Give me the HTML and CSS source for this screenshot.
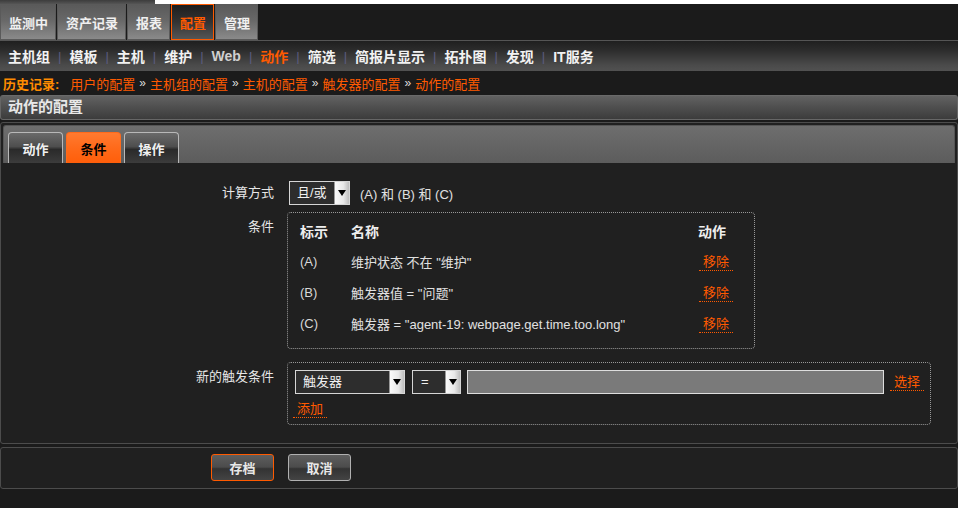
FILE: index.html
```html
<!DOCTYPE html>
<html lang="zh-CN">
<head>
<meta charset="utf-8">
<title>动作的配置</title>
<link rel="stylesheet" href="styles.css">
</head>
<body>
<div class="topstrip"><div class="ts-left"></div><div class="ts-right"></div></div>
<nav class="mainnav">
  <a class="mtab">监测中</a>
  <a class="mtab">资产记录</a>
  <a class="mtab">报表</a>
  <a class="mtab active">配置</a>
  <a class="mtab">管理</a>
</nav>
<nav class="subnav">
  <a>主机组</a><span class="sep">|</span>
  <a>模板</a><span class="sep">|</span>
  <a>主机</a><span class="sep">|</span>
  <a>维护</a><span class="sep">|</span>
  <a class="web">Web</a><span class="sep">|</span>
  <a class="on">动作</a><span class="sep">|</span>
  <a>筛选</a><span class="sep">|</span>
  <a>简报片显示</a><span class="sep">|</span>
  <a>拓扑图</a><span class="sep">|</span>
  <a>发现</a><span class="sep">|</span>
  <a>IT服务</a>
</nav>
<div class="crumbs">
  <span class="crumb-title">历史记录:</span>
  <a>用户的配置</a><span class="raquo">»</span>
  <a>主机组的配置</a><span class="raquo">»</span>
  <a>主机的配置</a><span class="raquo">»</span>
  <a>触发器的配置</a><span class="raquo">»</span>
  <a>动作的配置</a>
</div>
<div class="titlebar">动作的配置</div>
<div class="panel">
  <div class="tabstrip">
    <a class="ftab">动作</a>
    <a class="ftab active">条件</a>
    <a class="ftab">操作</a>
  </div>
  <div class="form">
    <div class="label">计算方式</div>
    <div class="field calc">
      <div class="sel sel-calc"><span class="val">且/或</span><span class="arr"></span></div>
      <span class="expr">(A) 和 (B) 和 (C)</span>
    </div>

    <div class="label lbl-box">条件</div>
    <div class="field">
      <div class="condbox">
        <div class="ctable">
          <div class="th">标示</div><div class="th">名称</div><div class="th">动作</div>
          <div class="td lat">(A)</div><div class="td">维护状态 不在 "维护"</div><div class="td"><a class="lnk">移除</a></div>
          <div class="td lat">(B)</div><div class="td">触发器值 = "问题"</div><div class="td"><a class="lnk">移除</a></div>
          <div class="td lat">(C)</div><div class="td">触发器 = "agent-19: webpage.get.time.too.long"</div><div class="td"><a class="lnk">移除</a></div>
        </div>
      </div>
    </div>

    <div class="label lbl-box">新的触发条件</div>
    <div class="field">
      <div class="newbox">
        <div class="newrow">
          <div class="sel sel-type"><span class="val">触发器</span><span class="arr"></span></div>
          <div class="sel sel-op"><span class="val">=</span><span class="arr"></span></div>
          <div class="txtin"></div>
          <a class="lnk">选择</a>
        </div>
        <div class="addrow"><a class="lnk">添加</a></div>
      </div>
    </div>
  </div>
</div>
<div class="footpanel">
  <button class="btn save">存档</button>
  <button class="btn">取消</button>
</div>
</body>
</html>
```

FILE: styles.css
```css
* { box-sizing: border-box; }
html, body { margin: 0; padding: 0; }
body {
  background: #1b1b1b;
  color: #e6e6e6;
  font-family: "Liberation Sans", "Noto Sans CJK SC", sans-serif;
  font-size: 13px;
  width: 958px;
  overflow: hidden;
}
a { cursor: pointer; }

.topstrip { display: flex; height: 4px; }
.ts-left { width: 155px; background: linear-gradient(#3c3c3c, #555); }
.ts-right { flex: 1; background: #fff; }

.mainnav { display: flex; height: 36px; background: #1b1b1b; }
.mtab {
  display: flex; align-items: center;
  padding: 0 7px 0 8px;
  margin-right: 1px;
  border: 1px solid #5a5a5a;
  background: linear-gradient(#5a5a5a 0%, #686868 45%, #8a8a8a 100%);
  color: #f0f0f0;
  font-weight: bold;
  font-size: 13px;
}
.mtab.active {
  border-color: #ff5a00;
  background: linear-gradient(#1e1e1e 0%, #333 50%, #555 100%);
  color: #ff5a00;
}

.subnav {
  display: flex; align-items: center;
  height: 31px;
  border-top: 1px solid #555;
  padding-left: 8px;
  background: linear-gradient(#1f1f1f 0%, #2c2c2c 30%, #4a4a4a 80%, #515151 100%);
  font-size: 14px;
  font-weight: bold;
  white-space: nowrap;
}
.subnav a { color: #f2f2f2; }
.subnav a.web { color: #cfcfcf; font-family: "Liberation Sans", sans-serif; font-size: 14px; }
.subnav a.on { color: #ff5a00; }
.subnav .sep { color: #5c5c80; padding: 0 8px; font-weight: normal; font-size: 13px; }

.crumbs {
  display: flex; align-items: center;
  height: 24px;
  padding-left: 3px;
  font-size: 13px;
  white-space: nowrap;
}
.crumb-title { color: #ff8c00; font-weight: bold; font-size: 13px; margin-right: 11px; }
.crumbs a { color: #ff5a00; }
.crumbs .raquo { color: #ddd; padding: 0 4px; font-size: 12px; }

.titlebar {
  height: 25px;
  border: 1px solid #666;
  border-top-color: #6a6a6a;
  border-radius: 3px;
  background: linear-gradient(#626262 0%, #4e4e4e 50%, #3c3c3c 100%);
  color: #e8e8e8;
  font-weight: bold;
  font-size: 15px;
  line-height: 22px;
  padding-left: 7px;
}

.panel {
  margin-top: 2px;
  height: 322px;
  border: 1px solid #4c4c4c;
  border-radius: 3px;
  background: #202020;
}
.tabstrip {
  display: flex; align-items: flex-end;
  margin: 2px 2px 0;
  height: 38px;
  padding-left: 4px;
  border: 1px solid #555;
  border-bottom: none;
  border-radius: 3px 3px 0 0;
  background: linear-gradient(#6e6e6e 0%, #5c5c5c 100%);
}
.ftab {
  width: 55px; height: 31px;
  margin-right: 3px;
  display: flex; align-items: center; justify-content: center;
  border: 1px solid #b8b8b8;
  border-bottom: none;
  border-radius: 4px 4px 0 0;
  background: linear-gradient(#6a6a6a 0%, #4e4e4e 45%, #2a2a2a 55%, #3c3c3c 100%);
  color: #f0f0f0;
  font-weight: bold;
  font-size: 13px;
}
.ftab.active {
  border-color: #ff6a1a;
  background: linear-gradient(#ff7a30 0%, #ff6a1a 50%, #ff5e0a 100%);
  color: #000;
}

.form {
  display: grid;
  grid-template-columns: 273px 1fr;
  column-gap: 13px;
  padding-top: 18px;
}
.label {
  text-align: right;
  color: #e6e6e6;
  font-size: 13px;
  line-height: 24px;
}
.lbl-box { line-height: 16px; padding-top: 7px; }
.field { min-width: 0; }
.calc { display: flex; align-items: center; margin-left: 2px; height: 24px; margin-bottom: 7px; }
.expr { margin-left: 10px; color: #e0e0e0; }

.sel {
  display: flex;
  flex: none;
  height: 24px;
  border: 1px solid #d6d6d6;
  background: #2d2d2d;
}
.sel .val { flex: 1; padding-left: 7px; line-height: 22px; color: #f0f0f0; }
.sel .arr {
  width: 15px;
  background: linear-gradient(90deg, #fafafa 0%, #e8e8e8 60%, #bdbdbd 100%);
  border-left: 1px solid #999;
  position: relative;
}
.sel .arr::after {
  content: "";
  position: absolute;
  left: 3px; top: 8px;
  border-left: 4px solid transparent;
  border-right: 4px solid transparent;
  border-top: 6px solid #000;
}
.sel-calc { width: 61px; }
.sel-type { width: 110px; }
.sel-op { width: 49px; margin-left: 7px; }
.sel-op .val { padding-left: 8px; }

.condbox {
  width: 468px;
  height: 137px;
  border: 1px dotted #999;
  border-radius: 4px;
  padding: 2px 12px 0;
  margin-bottom: 13px;
}
.ctable {
  display: grid;
  grid-template-columns: 51px 1fr 44px;
  grid-auto-rows: 31px;
  align-items: center;
}
.th { font-weight: bold; color: #eee; font-size: 14px; }
.td { color: #e0e0e0; }
.td.lat { color: #d8d8d8; }

.lnk {
  display: inline-block;
  color: #ff5a00;
  border-bottom: 1px dotted #ff5a00;
  padding: 0 4px;
  line-height: 16px;
  white-space: nowrap;
}
.ctable .lnk { margin-left: 1px; margin-top: 2px; }

.newbox {
  width: 644px;
  height: 63px;
  border: 1px dotted #999;
  border-radius: 4px;
  padding: 7px 5px 0 7px;
}
.newrow { display: flex; align-items: flex-start; height: 24px; }
.txtin {
  flex: none;
  width: 417px; height: 24px;
  margin-left: 6px;
  background: #7a7a7a;
  border: 1px solid #dedede;
}
.newrow .lnk { flex: none; margin-left: 6px; margin-top: 4px; }
.addrow { margin-top: 7px; margin-left: -2px; }

.footpanel {
  margin-top: 3px;
  height: 42px;
  border: 1px solid #4c4c4c;
  border-radius: 3px;
  background: #202020;
  padding: 6px 0 0 210px;
  display: flex;
  gap: 14px;
  align-items: flex-start;
}
.btn {
  width: 63px; height: 27px;
  border: 1px solid #b0b0b0;
  border-radius: 3px;
  background: linear-gradient(#5e5e5e 0%, #4c4c4c 48%, #333 55%, #444 100%);
  color: #e8e8e8;
  font-family: "Noto Sans CJK SC", sans-serif;
  font-weight: bold;
  font-size: 13px;
  padding: 0;
}
.btn.save { border-color: #ff5a00; }
```
